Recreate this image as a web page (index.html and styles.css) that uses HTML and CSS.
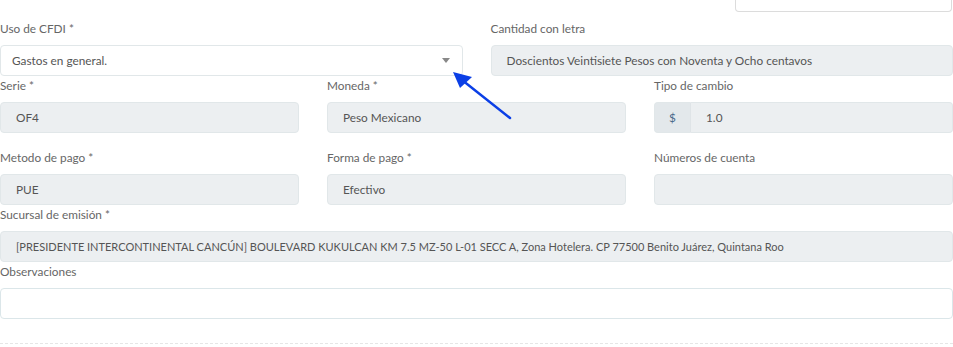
FILE: index.html
```html
<!DOCTYPE html>
<html lang="es">
<head>
    <meta charset="UTF-8">
    <meta name="viewport" content="width=device-width, initial-scale=1.0">
    <title>Factura</title>
    <link rel="stylesheet" href="styles.css">
</head>
<body>
    <div class="page">
        <div class="top-bar">
            <div class="top-box"></div>
        </div>

        <div class="row two">
            <div class="form-group">
                <label>Uso de CFDI *</label>
                <div class="select">
                    <span>Gastos en general.</span>
                    <span class="caret"></span>
                </div>
            </div>
            <div class="form-group">
                <label>Cantidad con letra</label>
                <div class="input">Doscientos Veintisiete Pesos con Noventa y Ocho centavos</div>
            </div>
        </div>

        <div class="row three spaced">
            <div class="form-group">
                <label>Serie *</label>
                <div class="input">OF4</div>
            </div>
            <div class="form-group">
                <label>Moneda *</label>
                <div class="input">Peso Mexicano</div>
            </div>
            <div class="form-group">
                <label>Tipo de cambio</label>
                <div class="input-group">
                    <span class="addon">$</span>
                    <div class="input">1.0</div>
                </div>
            </div>
        </div>

        <div class="row three">
            <div class="form-group">
                <label>Metodo de pago *</label>
                <div class="input">PUE</div>
            </div>
            <div class="form-group">
                <label>Forma de pago *</label>
                <div class="input">Efectivo</div>
            </div>
            <div class="form-group">
                <label>Números de cuenta</label>
                <div class="input"></div>
            </div>
        </div>

        <div class="form-group">
            <label>Sucursal de emisión *</label>
            <div class="input address">[PRESIDENTE INTERCONTINENTAL CANCÚN] BOULEVARD KUKULCAN KM 7.5 MZ-50 L-01 SECC A, Zona Hotelera. CP 77500 Benito Juárez, Quintana Roo</div>
        </div>

        <div class="form-group">
            <label>Observaciones</label>
            <div class="textarea"></div>
        </div>

        <div class="divider"></div>

        <svg class="pointer" width="70" height="50" viewBox="0 0 70 50">
            <line x1="58" y1="46" x2="10" y2="8" stroke="#0b3fe6" stroke-width="2.5" stroke-linecap="round"/>
            <polygon points="1,0 20,5 8,16" fill="#0b3fe6"/>
        </svg>
    </div>
</body>
</html>
```

FILE: styles.css
```css
* {
    box-sizing: border-box;
}
body {
    margin: 0;
    background: #fff;
    font-family: "Lato", "Open Sans", sans-serif;
    font-size: 11.8px;
    color: #555;
}
.page {
    position: relative;
    width: 953px;
    height: 347px;
    overflow: hidden;
}
.top-bar {
    display: flex;
    justify-content: flex-end;
    height: 20px;
}
.top-box {
    width: 217px;
    height: 12px;
    margin-right: 1px;
    border: 1px solid #dcdcdc;
    border-top: none;
    border-radius: 0 0 4px 4px;
}
.row {
    display: grid;
    column-gap: 28px;
}
.row.two {
    grid-template-columns: 1fr 1fr;
}
.row.three {
    grid-template-columns: 1fr 1fr 1fr;
}
.row.spaced {
    margin-bottom: 15px;
}
.form-group {
    margin-bottom: 1px;
}
label {
    display: block;
    height: 18px;
    line-height: 18px;
    margin-bottom: 7px;
    color: #666;
}
.input, .select, .textarea {
    height: 31px;
    line-height: 29px;
    padding: 0 15px;
    border: 1px solid #e1e7e9;
    border-radius: 4px;
    background: #eceff1;
    color: #555;
    white-space: nowrap;
    overflow: hidden;
}
.address {
    font-size: 11px;
}
.select {
    display: flex;
    justify-content: space-between;
    align-items: center;
    padding: 0 12px 0 11px;
    background: #fff;
}
.caret {
    width: 0;
    height: 0;
    border-left: 4px solid transparent;
    border-right: 4px solid transparent;
    border-top: 5px solid #888;
}
.textarea {
    background: #fff;
    border-color: #dbe6e9;
}
.input-group {
    display: flex;
}
.addon {
    width: 37px;
    height: 31px;
    line-height: 29px;
    text-align: center;
    background: #e3e8eb;
    border: 1px solid #e1e7e9;
    border-right: 1px solid #dfe4e7;
    border-radius: 4px 0 0 4px;
    color: #4a6a8a;
}
.input-group .input {
    flex: 1;
    border-left: none;
    border-radius: 0 4px 4px 0;
}
.divider {
    margin-top: 24px;
    border-top: 1px dashed #e6e6e6;
}
.pointer {
    position: absolute;
    left: 452px;
    top: 72px;
}
```
